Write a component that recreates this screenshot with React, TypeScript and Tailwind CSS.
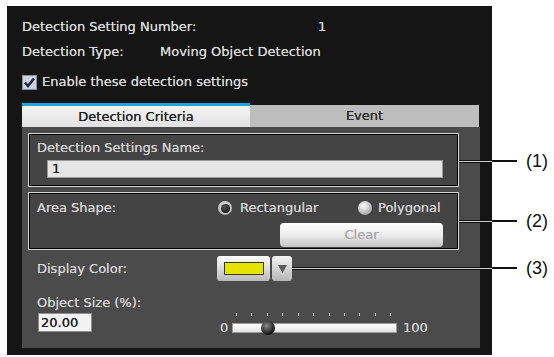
import React from 'react';

const TICKS = [4, 19, 35, 50, 66, 81, 97, 112, 127, 143, 158];

function Callout({ x, y, label }: { x: number; y: number; label: string }) {
  // leader line: light stroke inside the dark panel, solid black outside
  return (
    <>
      <div
        className="absolute h-[3px] bg-[#cfcfcf] border-y border-[#111]"
        style={{ left: x, top: y - 1, width: 492 - x }}
      />
      <div className="absolute left-[492px] h-[2px] w-[25px] bg-[#111]" style={{ top: y - 1 }} />
      <span
        className="absolute left-[526px] text-[18px] leading-[20px] text-[#111] font-['Liberation_Sans',Arial,sans-serif]"
        style={{ top: y - 10 }}
      >
        {label}
      </span>
    </>
  );
}

function Box({ children, className = '' }: { children: React.ReactNode; className?: string }) {
  return (
    <div
      className={`w-[431px] border border-[#d6d6d6] bg-[#444444] shadow-[inset_0_0_0_1px_#000] ${className}`}
    >
      {children}
    </div>
  );
}

export default function App() {
  return (
    <div className="relative w-[554px] h-[357px] bg-white pt-[6px] pl-[7px] overflow-hidden font-['DejaVu_Sans',Verdana,sans-serif] text-[13px]">
      <div className="w-[485px] h-[349px] bg-[#151515] pt-[11px] pl-[15px] flex flex-col [text-shadow:0_0_0.6px_currentColor]">
        {/* header info */}
        <div className="flex leading-[20px] text-[#d9d9d9]">
          <span className="w-[296px]">Detection Setting Number:</span>
          <span>1</span>
        </div>
        <div className="flex mt-[5px] leading-[20px] text-[#d9d9d9]">
          <span className="w-[138px]">Detection Type:</span>
          <span>Moving Object Detection</span>
        </div>
        <div className="flex items-center gap-[5px] mt-[10px] h-[20px] text-[#d9d9d9]">
          <svg width="15" height="15" viewBox="0 0 15 15">
            <rect x="0.5" y="0.5" width="14" height="14" fill="#cdd3d8" stroke="#8a9096" />
            <path d="M3 7.5 L6 11 L12 3.5" fill="none" stroke="#1b2850" strokeWidth="2.6" />
          </svg>
          <span>Enable these detection settings</span>
        </div>

        {/* tabs */}
        <div className="flex items-end mt-[11px] w-[458px] h-[24px]">
          <div className="w-[228px] h-[24px] border-t-[3px] border-[#1ba6d4] bg-gradient-to-b from-[#f4f4f4] to-[#e2e2e2] text-center leading-[21px] text-[#1f1f1f]">
            Detection Criteria
          </div>
          <div className="w-[229px] h-[22px] bg-[#bdbdbd] text-center leading-[22px] text-[#2a2a2a]">
            Event
          </div>
        </div>

        {/* tab body */}
        <div className="w-[458px] h-[221px] bg-[#4b4b4b] pt-[6px] pl-[6px] flex flex-col text-[#d2d2d2]">
          <Box className="h-[54px] pt-[6px]">
            <div className="pl-[8px] leading-[16px]">Detection Settings Name:</div>
            <div className="ml-[18px] mt-[4px] w-[396px] h-[18px] bg-[#e6e6e6] border border-[#9a9a9a] pl-[4px] leading-[16px] text-[#1e1e1e]">
              1
            </div>
          </Box>

          <Box className="h-[58px] mt-[5px] pt-[7px]">
            <div className="flex items-center h-[16px] leading-[16px]">
              <span className="pl-[8px] w-[189px]">Area Shape:</span>
              <div className="flex items-center gap-[8px] w-[140px]">
                <span className="w-[14px] h-[14px] rounded-full bg-[radial-gradient(circle_at_50%_40%,#f0f0f0,#9a9a9a)] flex items-center justify-center">
                  <span className="w-[9px] h-[9px] rounded-full bg-[radial-gradient(circle_at_40%_35%,#555,#050505)]" />
                </span>
                <span>Rectangular</span>
              </div>
              <div className="flex items-center gap-[6px]">
                <span className="w-[14px] h-[14px] rounded-full bg-[radial-gradient(circle_at_40%_35%,#ffffff,#b8b8b8_60%,#8c8c8c)]" />
                <span>Polygonal</span>
              </div>
            </div>
            <div className="ml-[251px] mt-[7px] w-[163px] h-[24px] rounded-[4px] bg-gradient-to-b from-[#ffffff] via-[#ececec] to-[#c2c2c2] text-center leading-[24px] text-[#a9a9a9]">
              Clear
            </div>
          </Box>

          {/* display color */}
          <div className="flex items-center mt-[6px] h-[25px]">
            <span className="ml-[9px] w-[180px]">Display Color:</span>
            <div className="w-[53px] h-[25px] rounded-[3px] bg-gradient-to-b from-[#ffffff] to-[#b9b9b9] flex items-center justify-center">
              <span className="w-[40px] h-[13px] bg-[#e4e400] border border-[#3a3a10]" />
            </div>
            <div className="ml-[2px] w-[20px] h-[25px] rounded-[3px] bg-gradient-to-b from-[#f4f4f4] to-[#b5b5b5] flex items-center justify-center">
              <svg width="9" height="8" viewBox="0 0 9 8">
                <path d="M0 0 H9 L4.5 8 Z" fill="#5a5a5a" />
              </svg>
            </div>
          </div>

          {/* object size */}
          <div className="ml-[9px] mt-[14px] leading-[16px]">Object Size (%):</div>
          <div className="flex items-start mt-[2px]">
            <div className="ml-[10px] w-[54px] h-[19px] bg-[#f2f2f2] border border-[#8e8e8e] pl-[2px] leading-[17px] text-[#1e1e1e]">
              20.00
            </div>
            <div className="flex items-end ml-[128px] h-[20px]">
              <span className="w-[12px] leading-[10px] text-[#d2d2d2]">0</span>
              <div className="relative w-[165px] h-[20px] flex flex-col justify-between">
                <div className="relative h-[3px]">
                  {TICKS.map((t) => (
                    <span key={t} className="absolute top-0 w-[1px] h-[3px] bg-[#bcbcbc]" style={{ left: t }} />
                  ))}
                </div>
                <div className="h-[10px] bg-gradient-to-b from-[#ffffff] to-[#e4e4e4] border border-[#9c9c9c]" />
                <span className="absolute left-[29px] top-[8px] w-[14px] h-[14px] rounded-full bg-[radial-gradient(circle_at_40%_35%,#8a8a8a,#1a1a1a_65%,#000)]" />
              </div>
              <span className="ml-[6px] leading-[10px] text-[#d2d2d2]">100</span>
            </div>
          </div>
        </div>
      </div>

      <Callout x={459} y={161} label="(1)" />
      <Callout x={459} y={221} label="(2)" />
      <Callout x={292} y={268} label="(3)" />
    </div>
  );
}
